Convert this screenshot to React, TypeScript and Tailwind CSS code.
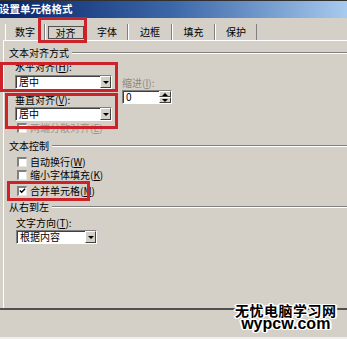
const tabs = [
  { label: "数字", w: "w-[40px]" },
  { label: "对齐", w: "w-[41px]", active: true },
  { label: "字体", w: "w-[42px]" },
  { label: "边框", w: "w-[44px]" },
  { label: "填充", w: "w-[43px]" },
  { label: "保护", w: "w-[42px]" },
];

function Acc({ text, k, tail = "" }: { text: string; k: string; tail?: string }) {
  return (
    <span>
      {text}(<span className="underline">{k}</span>){tail}
    </span>
  );
}

function Header({ title }: { title: string }) {
  return (
    <div className="flex items-center h-[14px] pl-[5px]">
      <span className="leading-[14px]">{title}</span>
      <div className="flex-1 ml-[3px] h-[2px] border-t border-[#808080] border-b border-b-white" />
    </div>
  );
}

function Combo({ value, w }: { value: string; w: string }) {
  return (
    <div
      className={`flex h-[14px] bg-white border border-t-[#808080] border-l-[#808080] border-b-white border-r-white shadow-[inset_1px_1px_0_#404040] ${w}`}
    >
      <span className="flex-1 pl-[3px] leading-[12px] text-[10px]">{value}</span>
      <div className="w-[11px] h-full bg-[#d4d0c8] border border-t-white border-l-white border-b-[#404040] border-r-[#404040] flex items-center justify-center">
        <div className="w-0 h-0 border-l-[3px] border-r-[3px] border-t-[3px] border-l-transparent border-r-transparent border-t-black" />
      </div>
    </div>
  );
}

function Check({ label, checked, disabled }: { label: React.ReactNode; checked?: boolean; disabled?: boolean }) {
  return (
    <div className="flex items-center h-[13px] pl-[13px]">
      <div className="w-[10px] h-[10px] bg-white border-t-2 border-l-2 border-[#808080] border-b border-r border-b-[#e8e6e0] border-r-[#e8e6e0] flex items-center justify-center">
        {checked && (
          <svg width="8" height="8" viewBox="0 0 8 8">
            <path d="M1 3.5 L3 5.5 L7 1.5" stroke="#000" strokeWidth="1.6" fill="none" />
          </svg>
        )}
      </div>
      <span className={`ml-[3px] leading-[13px] ${disabled ? "text-[#9a978f]" : ""}`}>{label}</span>
    </div>
  );
}

export default function App() {
  return (
    <div className="relative w-[347px] h-[339px] overflow-hidden bg-[#d4d0c8] flex flex-col text-[10px] text-black font-['Noto_Sans_CJK_SC','Liberation_Sans',sans-serif]">
      {/* 标题栏 */}
      <div className="h-[18px] border-t border-[#303030] bg-linear-to-r from-[#0a246a] via-[#3d68a8] to-[#a8caee]">
        <div className="-ml-[1px] text-white font-bold text-[10.5px] leading-[16px]">设置单元格格式</div>
      </div>

      <div className="h-[6px]" />

      {/* 选项卡 */}
      <div className="flex h-[16px] pl-[5px]">
        {tabs.map((t) => (
          <div
            key={t.label}
            className={`${t.w} h-full flex items-center justify-center border-l border-white border-r border-r-[#808080]`}
          >
            {t.active ? (
              <span className="px-[7px] leading-[11px] border border-[#505050]">{t.label}</span>
            ) : (
              <span className="leading-[14px]">{t.label}</span>
            )}
          </div>
        ))}
      </div>

      {/* 面板 */}
      <div className="h-[270px] border-b-2 border-b-[#505050]">
        <div className="ml-[3px] h-full border-t border-l border-white">
          <div className="mt-[5px]">
            <Header title="文本对齐方式" />
          </div>

          <div className="flex">
            <div className="pl-[11px] flex flex-col">
              <div className="h-[13px] leading-[13px]">
                <Acc text="水平对齐" k="H" tail=":" />
              </div>
              <div className="mt-[2px]">
                <Combo value="居中" w="w-[97px]" />
              </div>
              <div className="mt-[4px] h-[13px] leading-[13px]">
                <Acc text="垂直对齐" k="V" tail=":" />
              </div>
              <div className="mt-[1px]">
                <Combo value="居中" w="w-[97px]" />
              </div>
            </div>
            <div className="ml-[10px] mt-[16px] flex flex-col">
              <div className="h-[13px] leading-[13px] text-[#8a877f]">
                <Acc text="缩进" k="I" tail=":" />
              </div>
              <div className="mt-[1px] flex w-[50px] h-[14px] bg-white border border-t-[#808080] border-l-[#808080] border-b-white border-r-white shadow-[inset_1px_1px_0_#404040]">
                <span className="flex-1 pl-[3px] leading-[12px]">0</span>
                <div className="w-[12px] flex flex-col">
                  <div className="flex-1 bg-[#d4d0c8] border border-t-white border-l-white border-b-[#404040] border-r-[#404040] flex items-center justify-center">
                    <div className="w-0 h-0 border-l-[3px] border-r-[3px] border-b-[3px] border-l-transparent border-r-transparent border-b-black" />
                  </div>
                  <div className="flex-1 bg-[#d4d0c8] border border-t-white border-l-white border-b-[#404040] border-r-[#404040] flex items-center justify-center">
                    <div className="w-0 h-0 border-l-[3px] border-r-[3px] border-t-[3px] border-l-transparent border-r-transparent border-t-black" />
                  </div>
                </div>
              </div>
            </div>
          </div>

          <Check label={<Acc text="两端分散对齐" k="E" />} disabled />

          <div className="mt-[5px]">
            <Header title="文本控制" />
          </div>
          <div className="mt-[2px]">
            <Check label={<Acc text="自动换行" k="W" />} />
          </div>
          <Check label={<Acc text="缩小字体填充" k="K" />} />
          <div className="mt-[3px]">
            <Check label={<Acc text="合并单元格" k="M" />} checked />
          </div>

          <div className="mt-[3px]">
            <Header title="从右到左" />
          </div>
          <div className="mt-[2px] pl-[12px] h-[13px] leading-[13px]">
            <Acc text="文字方向" k="T" tail=":" />
          </div>
          <div className="mt-[1px] pl-[12px]">
            <Combo value="根据内容" w="w-[81px]" />
          </div>
        </div>
      </div>

      <div className="mt-auto h-[2px] bg-[#efede8]" />

      {/* 红框标注 */}
      <div className="absolute left-[38px] top-[17px] w-[49px] h-[26px] border-[3px] border-[#cc2229]" />
      <div className="absolute left-0 top-[62px] w-[118px] h-[30px] border-[3px] border-[#cc2229]" />
      <div className="absolute left-[5px] top-[93px] w-[113px] h-[36px] border-[3px] border-[#cc2229]" />
      <div className="absolute left-[7px] top-[181px] w-[83px] h-[20px] border-[3px] border-[#cc2229]" />

      {/* 水印 */}
      <div className="absolute left-[235px] top-[302px] flex flex-col items-center [text-shadow:1px_0_#fff,-1px_0_#fff,0_1px_#fff,0_-1px_#fff,1px_1px_#fff,-1px_-1px_#fff,1px_-1px_#fff,-1px_1px_#fff,2px_0_#fff,-2px_0_#fff]">
        <span className="text-[14px] leading-[16px] font-bold text-black tracking-[0.5px]">无忧电脑学习网</span>
        <span className="-mt-[2px] text-[16px] leading-[15px] font-bold text-black font-['Liberation_Sans',sans-serif]">wypcw.com</span>
      </div>
    </div>
  );
}
